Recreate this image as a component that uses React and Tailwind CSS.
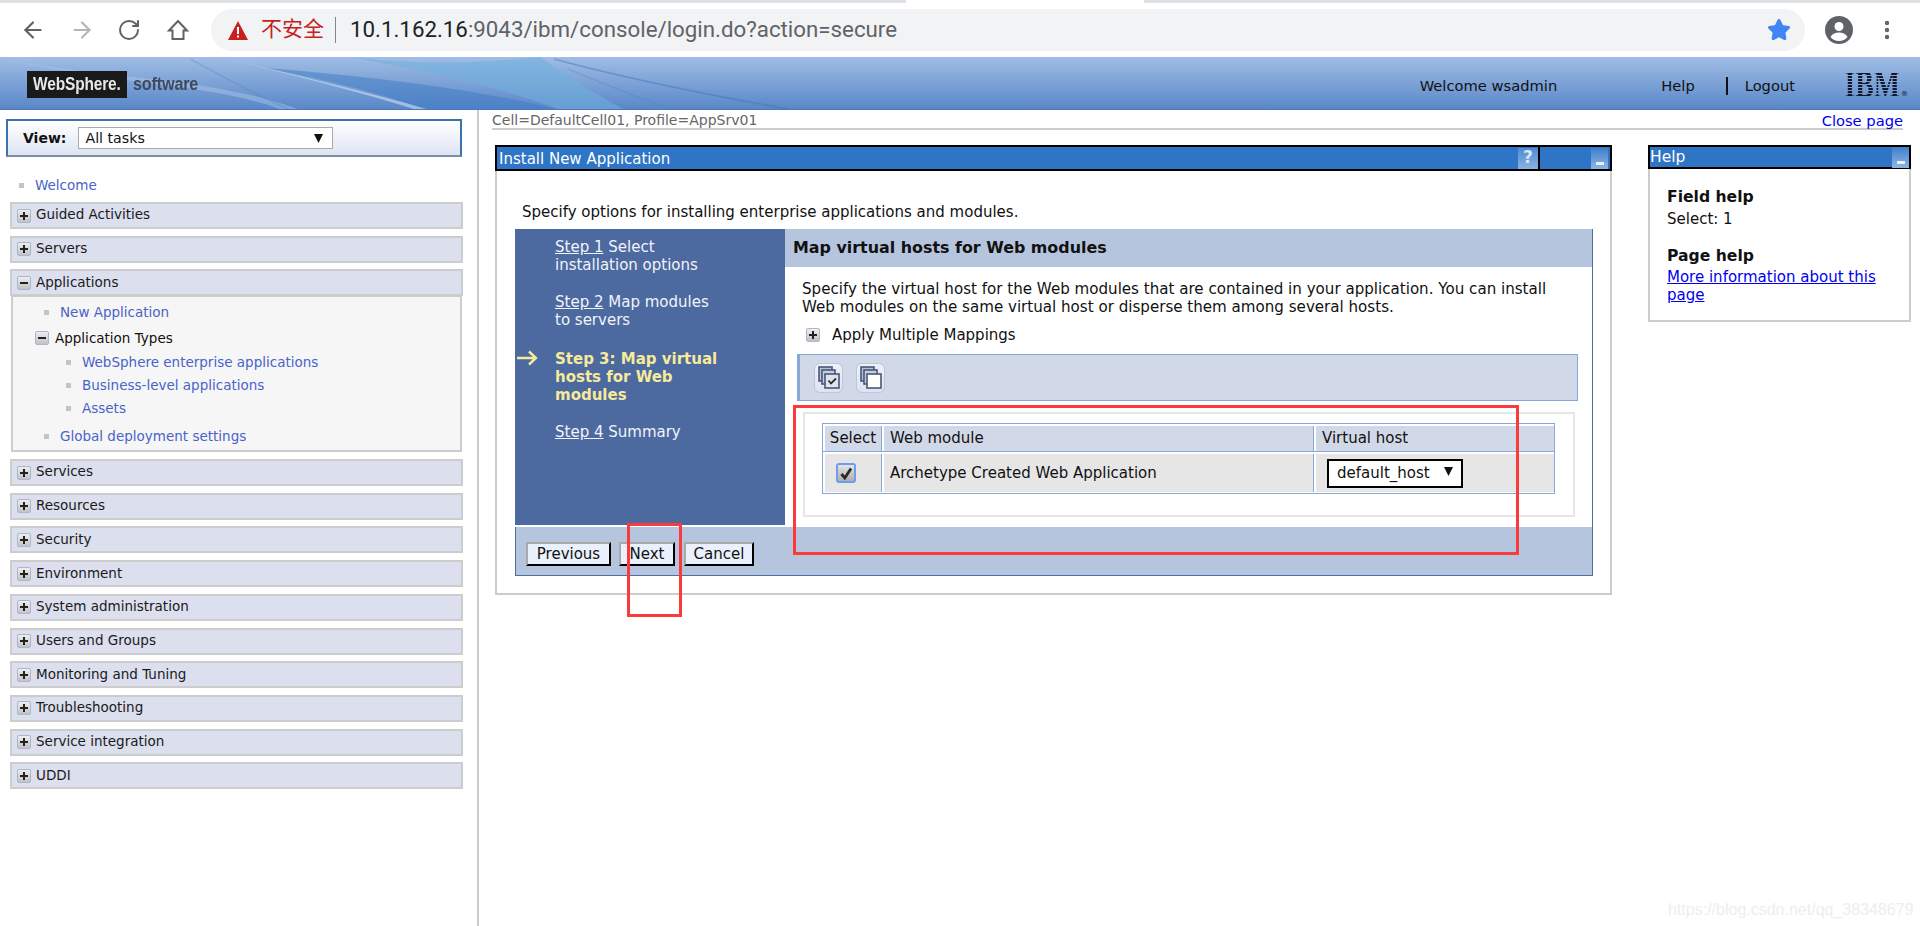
import React from 'react';
import { ArrowLeft, ArrowRight, RotateCw, Star, MoreVertical } from 'lucide-react';

// Small bevelled expand / collapse box used all over the console tree
const Toggle = ({ open }) => (
  <span className="flex h-[14px] w-[14px] shrink-0 items-center justify-center rounded-[2px] border border-[#a9b8cf] bg-gradient-to-b from-[#eeeeee] to-[#c2c2c2]">
    <svg width="8" height="8" viewBox="0 0 8 8">
      <rect x="0" y="3" width="8" height="2" fill="#222" />
      {!open && <rect x="3" y="0" width="2" height="8" fill="#222" />}
    </svg>
  </span>
);

const Bullet = () => <span className="h-[5px] w-[5px] shrink-0 bg-[#c4c4c4]" />;

const NavRow = ({ label, open }) => (
  <div className="flex h-[27px] items-center gap-[5px] border-2 border-[#cccccc] bg-[#dcdfee] pl-[5px] text-[13.5px] text-[#1a1a1a]">
    <Toggle open={open} />
    <span className="-mt-[2px]">{label}</span>
  </div>
);

const NavLink = ({ label, className }) => (
  <div className={`flex items-center ${className}`}>
    <Bullet />
    <span className="ml-[11px] text-[#4a63c9]">{label}</span>
  </div>
);

const Sidebar = () => (
  <aside className="w-[479px] shrink-0 border-r-2 border-[#cccccc] pt-[9px] pl-[6px] text-[13.5px]">
    <div className="flex h-[38px] w-[456px] items-center border-2 border-[#3b73af] border-b-[#7a8fa8] bg-gradient-to-b from-white to-[#dfe4f3] pl-[15px]">
      <span className="mt-[1px] text-[14px] font-bold text-[#111]">View:</span>
      <div className="ml-[12px] flex h-[22px] w-[255px] items-center justify-between border border-[#aaaaaa] bg-white pl-[6px] pr-[9px] text-[14.2px] text-[#111]">
        <span className="mt-[1px]">All tasks</span>
        <svg width="9" height="9" viewBox="0 0 9 9"><path d="M0 0H9L4.5 9Z" fill="#111" /></svg>
      </div>
    </div>
    <NavLink label="Welcome" className="mt-[19px] h-[18px] pl-[13px]" />
    <div className="mt-[8px] ml-[4px] flex w-[453px] flex-col gap-[6.7px]">
      <NavRow label="Guided Activities" />
      <NavRow label="Servers" />
      <div>
        <NavRow label="Applications" open />
        <div className="mx-[1px] -mt-[1px] h-[157px] border-2 border-[#cccccc] bg-[#f6f6f6] pt-[6px] pl-[31px]">
          <NavLink label="New Application" className="h-[18px]" />
          <div className="mt-[8px] -ml-[9px] flex h-[18px] items-center gap-[6px] text-[#111]">
            <Toggle open />
            <span>Application Types</span>
          </div>
          <NavLink label="WebSphere enterprise applications" className="mt-[6px] h-[18px] pl-[22px]" />
          <NavLink label="Business-level applications" className="mt-[5px] h-[18px] pl-[22px]" />
          <NavLink label="Assets" className="mt-[5px] h-[18px] pl-[22px]" />
          <NavLink label="Global deployment settings" className="mt-[10px] h-[18px]" />
        </div>
      </div>
      {['Services', 'Resources', 'Security', 'Environment', 'System administration', 'Users and Groups', 'Monitoring and Tuning', 'Troubleshooting', 'Service integration', 'UDDI'].map((item) => (
        <NavRow key={item} label={item} />
      ))}
    </div>
  </aside>
);

const WizardStep = ({ num, text, className }) => (
  <p className={`leading-[18px] text-[#f2f4f8] ${className}`}>
    <span className="underline">Step {num}</span> {text}
  </p>
);

// The two stacked-pages buttons in the table toolbar
const PagesIcon = ({ checked }) => (
  <span className="flex h-[30px] w-[29px] items-center justify-center rounded-[6px] border border-[#b8c6de] bg-gradient-to-b from-[#eef1f7] to-[#dde3ef]">
    <svg width="22" height="23" viewBox="0 0 22 23">
      <rect x="1" y="1" width="13" height="14" fill="#b8c0d4" stroke="#47577a" strokeWidth="1.6" />
      <rect x="4" y="4" width="13" height="14" fill="#c8cfde" stroke="#47577a" strokeWidth="1.6" />
      <rect x="7" y="8" width="14" height="14" fill={checked ? '#dfe4ee' : '#ffffff'} stroke="#47577a" strokeWidth="1.6" />
      {checked && <path d="M10.5 14.5l2.5 3 5-5" fill="none" stroke="#2c2c2c" strokeWidth="1.8" />}
    </svg>
  </span>
);

const WizButton = ({ label, width, className }) => (
  <button
    className={`flex h-[24px] items-center justify-center border-2 border-[#aaaaaa] border-r-black border-b-black bg-[#eaf1fd] text-[#111] ${width} ${className}`}
  >
    {label}
  </button>
);

const Wizard = () => (
  <div className="mt-[8px] -ml-[7px] w-[1078px]">
    <div className="flex h-[298px]">
      <div className="relative h-[296px] w-[270px] shrink-0 bg-[#4c69a0] pt-[9px] pl-[40px]">
        <WizardStep num="1" text="Select" />
        <p className="leading-[18px] text-[#f2f4f8]">installation options</p>
        <WizardStep num="2" text="Map modules" className="mt-[19px]" />
        <p className="leading-[18px] text-[#f2f4f8]">to servers</p>
        <svg className="absolute top-[121px] left-[2px]" width="21" height="16" viewBox="0 0 21 16">
          <path d="M0 8H19M12 1.5L19 8L12 14.5" fill="none" stroke="#f7eb9b" strokeWidth="2.4" />
        </svg>
        <div className="mt-[21px] leading-[18px] font-bold text-[#f7eb9b]">
          Step 3: Map virtual
          <br />
          hosts for Web
          <br />
          modules
        </div>
        <WizardStep num="4" text="Summary" className="mt-[19px]" />
      </div>
      <div className="min-w-0 flex-1 border-r border-[#4f6ea5]">
        <div className="flex h-[38px] items-center bg-[#b5c5de] pl-[8px] text-[15.9px] font-bold text-[#111]">
          Map virtual hosts for Web modules
        </div>
        <p className="mt-[13px] ml-[17px] text-[15.1px] leading-[18px] text-[#111]">
          Specify the virtual host for the Web modules that are contained in your application. You can install
          <br />
          Web modules on the same virtual host or disperse them among several hosts.
        </p>
        <div className="mt-[10px] ml-[21px] flex h-[18px] items-center gap-[12px] text-[#111]">
          <Toggle />
          <span>Apply Multiple Mappings</span>
        </div>
        <div className="mt-[10px] ml-[12px] flex h-[47px] w-[781px] items-center gap-[13px] border border-[#8aa7dc] border-l-[3px] bg-[#d1d8e8] pl-[14px]">
          <PagesIcon checked />
          <PagesIcon />
        </div>
        <div className="mt-[11px] ml-[18px] h-[105px] w-[772px] border-2 border-[#e6e6e6] pt-[9px] pl-[17px]">
          <div className="h-[71px] w-[733px] border border-[#8aa7dc] bg-white text-[#111]">
            <div className="grid h-[28px] grid-cols-[59px_432px_1fr] border-b border-[#8aa7dc]">
              <div className="flex items-center justify-center border-r border-[#8aa7dc] bg-[#d1d8e8] ml-[2px] mt-[2px]">Select</div>
              <div className="flex items-center border-r border-[#8aa7dc] bg-[#d1d8e8] mt-[2px] pl-[6px] ml-[2px]">Web module</div>
              <div className="flex items-center bg-[#d1d8e8] mt-[2px] pl-[6px] ml-[2px]">Virtual host</div>
            </div>
            <div className="grid h-[40px] grid-cols-[59px_432px_1fr]">
              <div className="ml-[2px] mt-[2px] flex items-center border-r border-[#8aa7dc] bg-[#e6e6e6] pl-[11px]">
                <span className="flex h-[20px] w-[20px] items-center justify-center rounded-[3px] border-2 border-[#6d9eea] bg-gradient-to-b from-[#e4e4e4] to-[#aeaeae]">
                  <svg width="13" height="13" viewBox="0 0 13 13"><path d="M1.500 7L4.800 11L11 1.500" fill="none" stroke="#2a2a2a" strokeWidth="2.800" /></svg>
                </span>
              </div>
              <div className="ml-[2px] mt-[2px] flex items-center border-r border-[#8aa7dc] bg-[#e6e6e6] pl-[6px]">Archetype Created Web Application</div>
              <div className="ml-[2px] mt-[2px] flex items-center bg-[#e6e6e6] pl-[11px]">
                <div className="flex h-[29px] w-[136px] items-center justify-between border-2 border-black bg-white pl-[8px] pr-[8px]">
                  <span>default_host</span>
                  <svg className="mb-[4px]" width="9" height="9" viewBox="0 0 9 9"><path d="M0 0H9L4.5 9Z" fill="#111" /></svg>
                </div>
              </div>
            </div>
          </div>
        </div>
      </div>
    </div>
    <div className="flex h-[49px] items-center gap-[8px] border-r border-b border-l border-[#4f6ea5] bg-[#b5c5de] pl-[10px] pt-[6px]">
      <WizButton label="Previous" width="w-[85px]" />
      <WizButton label="Next" width="w-[56px]" />
      <WizButton label="Cancel" width="w-[70px]" className="ml-[1px]" />
    </div>
  </div>
);

const Minimize = () => (
  <span className="flex h-[21px] w-[17px] items-end justify-center bg-gradient-to-b from-[#3e80cd] to-[#8fb5e2] pb-[4px]">
    <span className="h-[3px] w-[8px] bg-[#e8f0fa]" />
  </span>
);

const Main = () => (
  <main className="min-w-0 flex-1 pl-[13px] text-[15px]">
    <div className="flex h-[20px] w-[1411px] justify-between border-b-2 border-[#cccccc]">
      <span className="text-[14px] text-[#666666]">Cell=DefaultCell01, Profile=AppSrv01</span>
      <span className="text-[14.7px] text-[#0000ee]">Close page</span>
    </div>
    <div className="mt-[15px] flex items-start gap-[36px] pl-[3px]">
      <section className="h-[450px] w-[1117px] shrink-0 border-r-2 border-b-2 border-l-2 border-[#cccccc]">
        <div className="-mx-[2px] flex h-[26px] items-center justify-between border-2 border-black bg-[#2f75c6] pl-[2px] text-white">
          <span className="mt-[3px]">Install New Application</span>
          <div className="flex h-full items-center">
            <span className="flex h-[21px] w-[20px] items-center justify-center bg-gradient-to-b from-[#4e8bd4] to-[#8ab2e2] text-[17px] font-bold text-[#d8e6f7]">?</span>
            <span className="h-full w-[2px] bg-black" />
            <span className="ml-[51px] mr-[2px]"><Minimize /></span>
          </div>
        </div>
        <div className="pt-[32px] pl-[25px]">
          <p className="h-[18px] leading-[18px] text-[#111]">Specify options for installing enterprise applications and modules.</p>
          <Wizard />
        </div>
      </section>
      <section className="h-[177px] w-[263px] shrink-0 border-r-2 border-b-2 border-l-2 border-[#cccccc]">
        <div className="-mx-[2px] flex h-[24px] items-center justify-between border-2 border-black bg-[#2f75c6] text-[15.5px] text-white">
          <span className="mt-[2px]">Help</span>
          <Minimize />
        </div>
        <div className="pt-[19px] pl-[17px] leading-[18px] text-[#111]">
          <p className="text-[15.6px] font-bold">Field help</p>
          <p className="mt-[4px]">Select: 1</p>
          <p className="mt-[19px] text-[15.6px] font-bold">Page help</p>
          <p className="mt-[3px] text-[#0000ee] underline">
            More information about this
            <br />
            page
          </p>
        </div>
      </section>
    </div>
  </main>
);

const BrowserBar = () => (
  <div className="h-[57px] bg-white">
    <div className="flex h-[3px] justify-between">
      <div className="w-[906px] bg-[#dee1e6]" />
      <div className="w-[776px] bg-[#dee1e6]" />
    </div>
    <div className="flex h-[54px] items-center text-[#5f6368]">
      <ArrowLeft className="ml-[20px]" size={26} strokeWidth={2} />
      <ArrowRight className="ml-[23px] text-[#b4b6b9]" size={26} strokeWidth={2} />
      <RotateCw className="ml-[22px]" size={24} strokeWidth={2} />
      <svg className="ml-[25px]" width="24" height="24" viewBox="0 0 24 24" fill="none" stroke="#5f6368" strokeWidth="2">
        <path d="M12 3L21 12.500H17.500V21H6.500V12.500H3Z" />
      </svg>
      <div className="ml-[21px] flex h-[42px] w-[1594px] items-center rounded-full bg-[#f1f3f4] pl-[17px] font-['Roboto','Noto_Sans_CJK_SC',sans-serif] text-[22.3px]">
        <svg width="20" height="19" viewBox="0 0 20 19"><path d="M10 0L20 19H0Z" fill="#c5221f" /><rect x="9" y="6" width="2" height="7" fill="#fff" /><rect x="9" y="14.5" width="2" height="2" fill="#fff" /></svg>
        <span className="ml-[13px] text-[21px] text-[#c5221f]">不安全</span>
        <span className="ml-[11px] h-[26px] w-px bg-[#80868b]" />
        <span className="ml-[14px] text-[#202124]">10.1.162.16</span>
        <span>:9043/ibm/console/login.do?action=secure</span>
        <Star className="ml-auto mr-[14px] text-[#4285f4]" size={24} fill="#4285f4" />
      </div>
      <svg className="ml-[20px]" width="28" height="28" viewBox="0 0 28 28">
        <circle cx="14" cy="14" r="14" fill="#5f6368" />
        <circle cx="14" cy="10.5" r="4.5" fill="#fff" />
        <path d="M5.500 21c2-3.500 5-4.500 8.500-4.500s6.500 1 8.500 4.500c-2 2.500-5 4-8.500 4s-6.500-1.500-8.500-4z" fill="#fff" />
      </svg>
      <MoreVertical className="ml-[22px]" size={24} strokeWidth={2.4} />
    </div>
  </div>
);

const Header = () => (
  <header className="relative flex h-[53px] items-center overflow-hidden border-b border-[#4d78b8] bg-gradient-to-b from-[#a0bde4] to-[#5a87c8] text-[#111]">
    {/* swooshes from the banner image */}
    <svg className="absolute top-0 left-0" width="800" height="53" viewBox="0 0 800 53">
      <path d="M350 0C430 10 500 4 540 0C570 20 600 40 625 53H560C500 30 430 15 350 0Z" fill="#6fb0dd" fillOpacity="0.55" />
      <path d="M265 11C350 18 470 30 560 53H425C380 35 320 22 265 11Z" fill="#3e7cc4" fillOpacity="0.5" />
      <path d="M230 2C300 20 370 35 430 53H417C360 35 290 18 230 2Z" fill="#d5e6f7" fillOpacity="0.55" />
      <path d="M0 2C70 15 150 20 210 30C250 37 280 45 300 53H282C250 40 200 32 140 25C90 18 40 10 0 2Z" fill="#b5d0ee" fillOpacity="0.4" />
      <path d="M190 2C215 15 250 35 290 53" fill="none" stroke="#4f80c4" strokeOpacity="0.3" strokeWidth="1.500" />
      <path d="M554 2C620 20 720 40 793 53" fill="none" stroke="#3f70b8" strokeOpacity="0.45" strokeWidth="1.500" />
      <path d="M568 12C600 25 640 42 673 53" fill="none" stroke="#4f80c4" strokeOpacity="0.3" strokeWidth="1.500" />
    </svg>
    <div className="relative mt-[2px] ml-[27px] flex h-[27px] w-[100px] items-center justify-center overflow-hidden bg-[#1a1a1a] font-['Liberation_Sans',sans-serif] text-[18px] font-bold tracking-[-0.2px] text-[#e8e8e8]">
      <span className="scale-x-[.86]">WebSphere.</span>
    </div>
    <span className="relative mt-[2px] ml-[6px] origin-left scale-x-[.9] font-['Liberation_Sans',sans-serif] text-[18px] font-bold tracking-[-0.2px] text-[#3f4a5e]">software</span>
    <div className="relative ml-auto flex items-center font-['DejaVu_Sans',sans-serif] text-[14.7px]">
      <span className="mt-[6px]">Welcome wsadmin</span>
      <span className="mt-[6px] ml-[104px]">Help</span>
      <span className="mt-[6px] ml-[31px] h-[18px] w-[2px] bg-[#111]" />
      <span className="mt-[6px] ml-[17px]">Logout</span>
      <span className="mt-[3px] ml-[31px] mr-[20px] origin-right scale-x-[.75] bg-[repeating-linear-gradient(to_bottom,#10182a_0,#10182a_2px,transparent_2px,transparent_3px)] bg-clip-text font-['Liberation_Serif',serif] text-[37px] leading-[30px] font-bold text-transparent">
        IBM
      </span>
      <span className="absolute right-[12px] bottom-[2px] text-[7px] leading-none">®</span>
    </div>
  </header>
);

const App = () => (
  <div className="relative h-[926px] w-[1920px] overflow-hidden bg-white font-['DejaVu_Sans',sans-serif]">
    <BrowserBar />
    <Header />
    <div className="flex h-[816px]">
      <Sidebar />
      <Main />
    </div>
    {/* red annotation boxes drawn over the screenshot */}
    <div className="absolute top-[405px] left-[793px] h-[150px] w-[726px] border-[3px] border-[#fb3b3b]" />
    <div className="absolute top-[523px] left-[627px] h-[94px] w-[55px] border-[3px] border-[#fb3b3b]" />
    <span className="absolute top-[898px] left-[1668px] font-['Liberation_Sans',sans-serif] text-[16px] text-[#eeeeee]">https://blog.csdn.net/qq_38348679</span>
  </div>
);

export default App;
